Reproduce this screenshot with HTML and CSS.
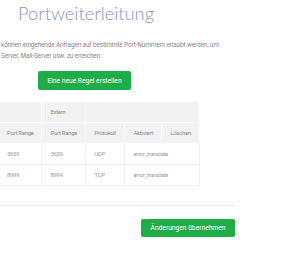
FILE: index.html
```html
<!DOCTYPE html>
<html lang="de">
<head>
    <meta charset="UTF-8">
    <meta name="viewport" content="width=device-width, initial-scale=1.0">
    <title>Portweiterleitung</title>
    <link rel="stylesheet" href="styles.css">
</head>
<body>

<div id="content">
    <h1 class="title">Portweiterleitung</h1>
    <p class="intro">können eingehende Anfragen auf bestimmte Port-Nummern erlaubt werden, um<br>Server, Mail-Server usw. zu erreichen:</p>

    <div class="new-rule">
        <button class="btn">Eine neue Regel erstellen</button>
    </div>

    <div class="rules">
        <table id="rules-table">
            <colgroup>
                <col class="c1">
                <col class="c2">
                <col class="c3">
                <col class="c4">
                <col class="c5">
            </colgroup>
            <thead>
                <tr>
                    <th></th>
                    <th>Extern</th>
                    <th colspan="3"></th>
                </tr>
                <tr>
                    <th>Port Range</th>
                    <th>Port Range</th>
                    <th>Protokoll</th>
                    <th>Aktiviert</th>
                    <th>Löschen</th>
                </tr>
            </thead>
            <tbody>
                <tr>
                    <td>3659</td>
                    <td>3659</td>
                    <td>UDP</td>
                    <td colspan="2">error_translate</td>
                </tr>
                <tr>
                    <td>8999</td>
                    <td>8999</td>
                    <td>TCP</td>
                    <td colspan="2">error_translate</td>
                </tr>
            </tbody>
        </table>
    </div>

    <div class="save">
        <button class="btn">Änderungen übernehmen</button>
    </div>
</div>

</body>
</html>
```

FILE: styles.css
```css
body {
    margin: 0;
    font-family: Roboto, "Liberation Sans", sans-serif;
    background: #fff;
    color: #888;
}
#content {
    width: 235px;
}
.title {
    margin: 0;
    padding: 1px 0 0 18px;
    font-family: Lato, sans-serif;
    font-weight: 300;
    font-size: 18.3px;
    line-height: 24px;
    color: #8c91c9;
}
.intro {
    margin: 15px 0 0 1px;
    font-size: 6.5px;
    line-height: 11px;
    letter-spacing: -0.16px;
    color: #888;
    white-space: nowrap;
}
.new-rule {
    display: flex;
    padding: 9px 0 0 38px;
}
.btn {
    border: none;
    border-radius: 2px;
    background: #1fad4a;
    color: #fff;
    font-family: Roboto, sans-serif;
    font-size: 6.7px;
    height: 19px;
    width: 93px;
    padding: 0;
}
.rules {
    margin-top: 11px;
    padding-bottom: 19px;
    border-bottom: 1px solid #e8e8e8;
}
#rules-table {
    border-collapse: collapse;
    table-layout: fixed;
    width: 199px;
    font-size: 5.8px;
    letter-spacing: -0.2px;
}
.c1 { width: 41px; }
.c2 { width: 44px; }
.c3 { width: 39px; }
.c4 { width: 37px; }
.c5 { width: 38px; }
#rules-table th,
#rules-table td {
    height: 21px;
    padding: 0 0 0 9px;
    text-align: left;
    font-weight: normal;
    box-sizing: border-box;
    white-space: nowrap;
}
#rules-table th {
    background: #f2f2f2;
    color: #888;
    border: 1px solid #fff;
}
#rules-table td {
    color: #999;
    border: 1px solid #efefef;
}
#rules-table th:first-child,
#rules-table td:first-child {
    padding-left: 7px;
    border-left: none;
}
.save {
    display: flex;
    justify-content: flex-end;
    padding-top: 13px;
}
.save .btn {
    height: 18px;
    width: 94px;
}
```
